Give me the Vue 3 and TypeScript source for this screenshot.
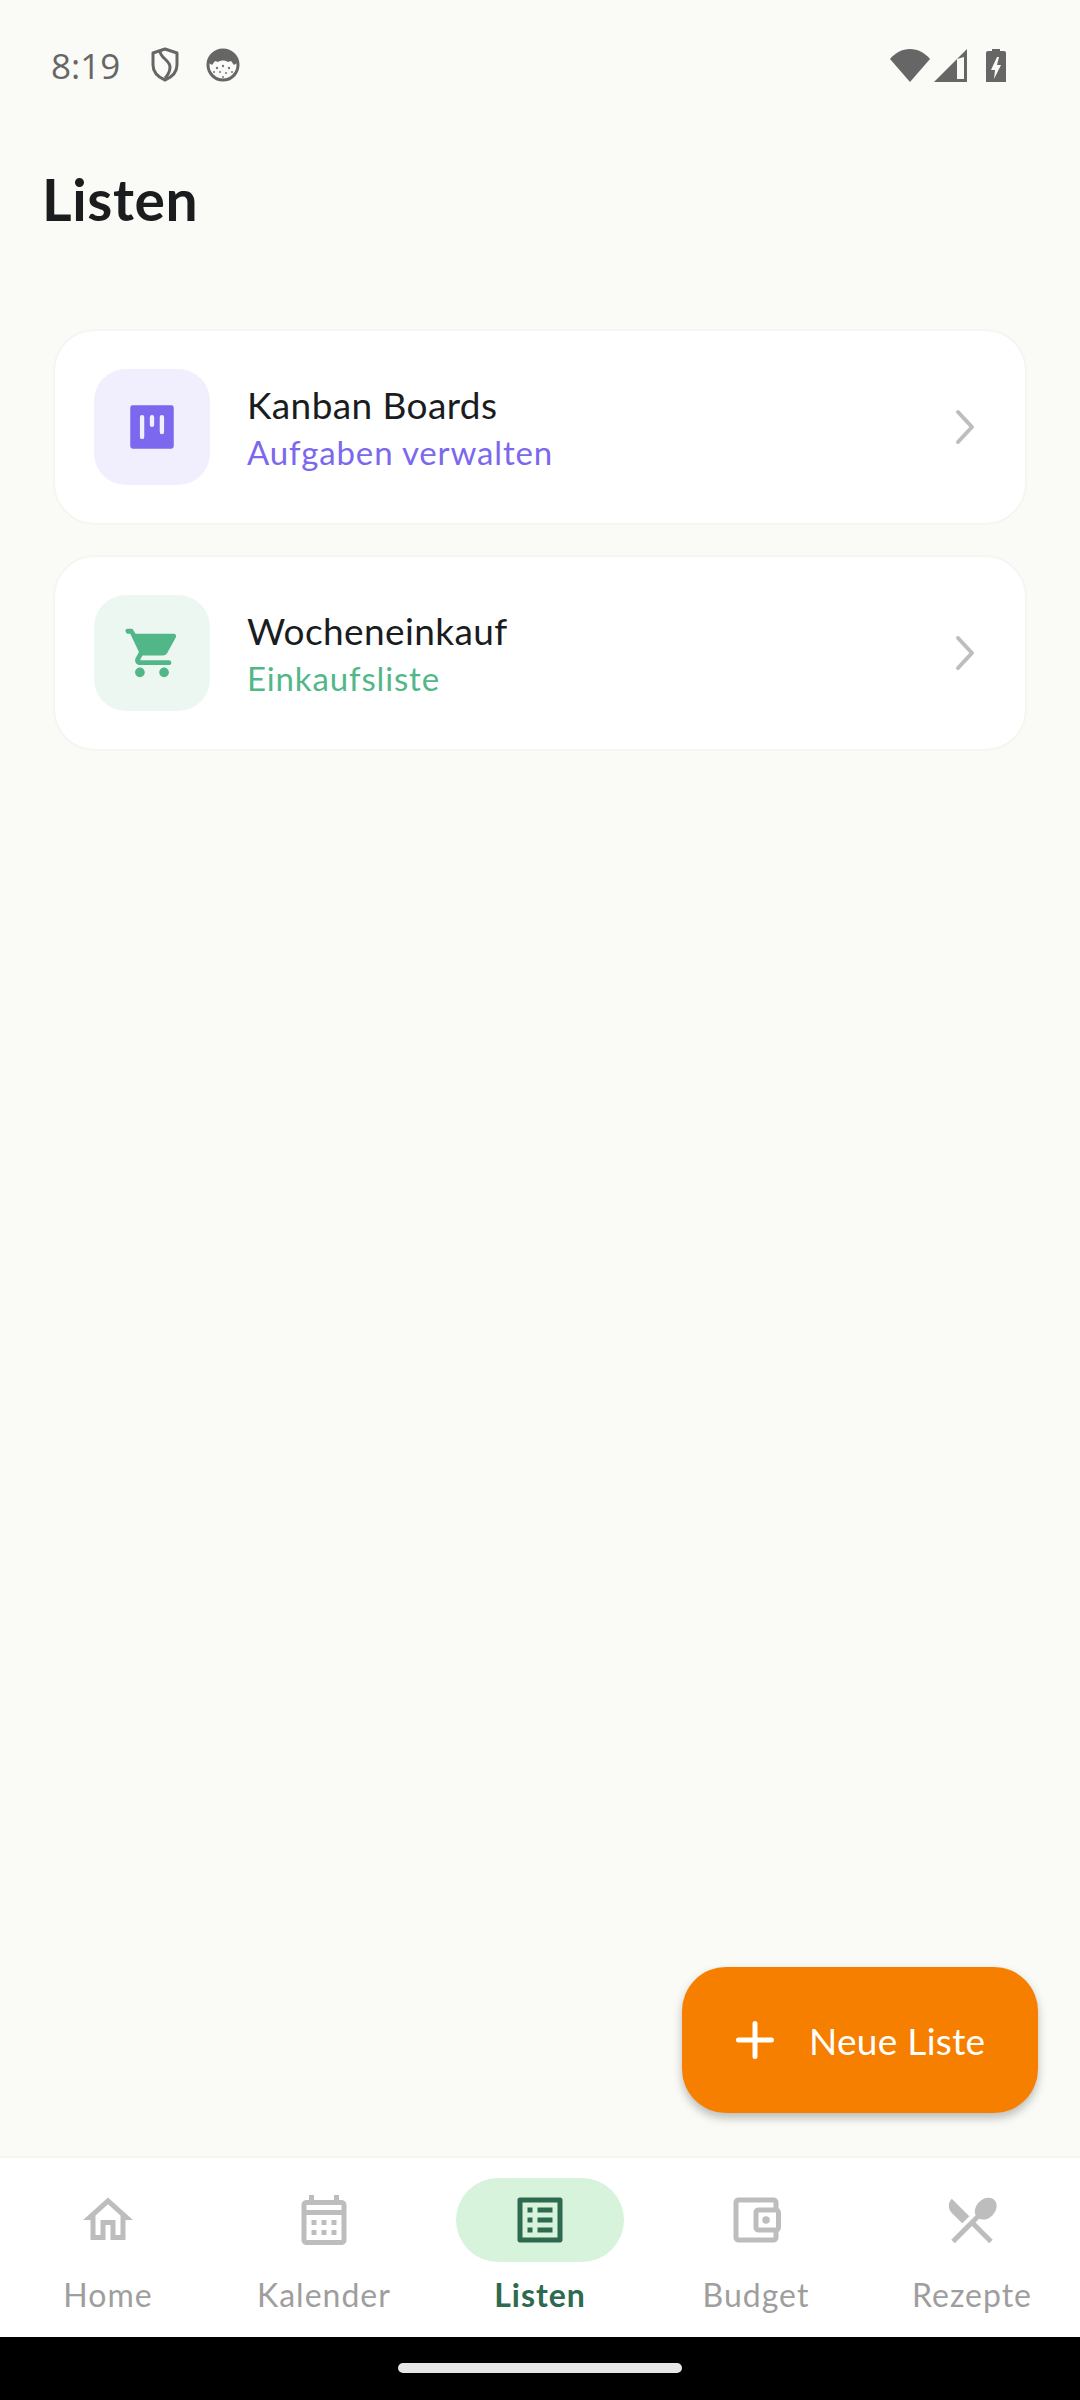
<script setup lang="ts">
interface ListCard {
  title: string
  subtitle: string
  tone: 'purple' | 'green'
}

interface NavItem {
  label: string
  path: string
  active?: boolean
}

const cards: ListCard[] = [
  { title: 'Kanban Boards', subtitle: 'Aufgaben verwalten', tone: 'purple' },
  { title: 'Wocheneinkauf', subtitle: 'Einkaufsliste', tone: 'green' },
]

const navItems: NavItem[] = [
  {
    label: 'Home',
    path: 'M12 5.69l5 4.5V18h-2v-6H9v6H7v-7.81l5-4.5M12 3L2 12h3v8h6v-6h2v6h6v-8h3L12 3z',
  },
  {
    label: 'Kalender',
    path: 'M19 4h-1V2h-2v2H8V2H6v2H5c-1.11 0-1.99.9-1.99 2L3 20c0 1.1.89 2 2 2h14c1.1 0 2-.9 2-2V6c0-1.1-.9-2-2-2zm0 16H5V10h14v10zm0-12H5V6h14v2zM9 14H7v-2h2v2zm4 0h-2v-2h2v2zm4 0h-2v-2h2v2zm-8 4H7v-2h2v2zm4 0h-2v-2h2v2zm4 0h-2v-2h2v2z',
  },
  {
    label: 'Listen',
    active: true,
    path: 'M19 5v14H5V5h14m1.1-2H3.9c-.5 0-.9.4-.9.9v16.2c0 .4.4.9.9.9h16.2c.4 0 .9-.5.9-.9V3.9c0-.5-.5-.9-.9-.9zM11 7h6v2h-6V7zm0 4h6v2h-6v-2zm0 4h6v2h-6zM7 7h2v2H7zm0 4h2v2H7zm0 4h2v2H7z',
  },
  {
    label: 'Budget',
    path: 'M21 7.28V5c0-1.1-.9-2-2-2H5c-1.11 0-2 .9-2 2v14c0 1.1.89 2 2 2h14c1.1 0 2-.9 2-2v-2.28c.59-.35 1-.98 1-1.72V9c0-.74-.41-1.38-1-1.72zM20 9v6h-7V9h7zM5 19V5h14v2h-6c-1.1 0-2 .9-2 2v6c0 1.1.9 2 2 2h6v2H5zM16 13.5a1.5 1.5 0 1 0 0-3 1.5 1.5 0 0 0 0 3z',
  },
  {
    label: 'Rezepte',
    path: 'M8.1 13.34l2.83-2.83L3.91 3.5c-1.56 1.56-1.56 4.09 0 5.66l4.19 4.18zm6.78-1.81c1.53.71 3.68.21 5.27-1.38 1.91-1.91 2.28-4.65.81-6.12-1.46-1.46-4.2-1.1-6.12.81-1.59 1.59-2.09 3.74-1.38 5.27L3.7 19.87l1.41 1.41L12 14.41l6.88 6.88 1.41-1.41L13.41 13l1.47-1.47z',
  },
]
</script>

<template>
  <div class="page">
    <div class="status-bar">
      <span class="time">8:19</span>
      <svg class="status-shield" viewBox="0 0 30 36" width="30" height="36">
        <path d="M15 2l12 4v12c0 7-5 12-12 15C8 30 3 25 3 18V6z" fill="none" stroke="#666" stroke-width="3" stroke-linejoin="round" />
        <path d="M10 4c0 7 10 9 10 16 0 4-2 8-5 11" fill="none" stroke="#666" stroke-width="3" />
      </svg>
      <svg class="status-face" viewBox="0 0 34 34" width="34" height="34">
        <circle cx="17" cy="17" r="15" fill="#fafbf6" stroke="#666" stroke-width="3" />
        <path d="M3 15C4 7 10 2 17 2s13 5 14 13l-3 2-3-4-3 1c-3-2-7-2-10 0l-3-1-3 4z" fill="#666" />
        <g fill="#777">
          <circle cx="11" cy="20" r="1.2" /><circle cx="17" cy="18" r="1.2" /><circle cx="23" cy="20" r="1.2" />
          <circle cx="8" cy="24" r="1" /><circle cx="14" cy="24" r="1" /><circle cx="20" cy="25" r="1" />
          <circle cx="26" cy="24" r="1" /><circle cx="17" cy="29" r="1" />
        </g>
      </svg>
      <div class="status-right">
        <svg viewBox="0 0 40 33" width="40" height="33">
          <path d="M0 10C5 4 12 0 20 0s15 4 20 10L20 33z" fill="#666" />
        </svg>
        <svg viewBox="0 0 33 33" width="33" height="33">
          <path d="M33 0v33H0zM23 10v20h7V8z" fill="#666" fill-rule="evenodd" />
        </svg>
        <svg class="status-battery" viewBox="0 0 20 33" width="20" height="33">
          <path d="M6 0h8v2h4a2 2 0 0 1 2 2v29H0V4a2 2 0 0 1 2-2h4zM11 8l-6 13h4l-1 9 7-14h-4l2-8z" fill="#666" fill-rule="evenodd" />
        </svg>
      </div>
    </div>

    <h1 class="page-title">Listen</h1>

    <main class="list">
      <div v-for="card in cards" :key="card.title" class="card">
        <div class="card-icon" :class="card.tone">
          <svg v-if="card.tone === 'purple'" viewBox="0 0 24 24" width="58" height="58">
            <path
              d="M4 3h16a1 1 0 0 1 1 1v16a1 1 0 0 1-1 1H4a1 1 0 0 1-1-1V4a1 1 0 0 1 1-1zM7.900 7a.9.9 0 0 0-.9.9v8.200a.9.9 0 0 0 1.800 0V7.900a.9.9 0 0 0-.9-.9zM12 7a.9.9 0 0 0-.9.9v3.200a.9.9 0 0 0 1.800 0V7.900A.9.9 0 0 0 12 7zM16.100 7a.9.900 0 0 0-.9.9v6.200a.9.900 0 0 0 1.800 0V7.900a.9.900 0 0 0-.9-.9z"
              fill="#7b68ee"
              fill-rule="evenodd"
            />
          </svg>
          <svg v-else viewBox="0 0 24 24" width="58" height="58">
            <path
              d="M7 18c-1.100 0-1.990.9-1.990 2S5.900 22 7 22s2-.9 2-2-.9-2-2-2zM1 2.800C1 2.400 1.400 2 1.800 2h1.500c.4 0 .8.200 1 .6l.9 1.400H21c.55 0 1 .45 1 1 0 .17-.04.34-.12.48l-3.580 6.490c-.34.62-1 1.030-1.750 1.030H8.100l-.9 1.630-.03.120c0 .14.110.25.25.25H19c.55 0 1 .45 1 1s-.45 1-1 1H7c-1.100 0-2-.9-2-2 0-.35.09-.68.25-.96L6.600 11.590 3 4H1.800C1.400 4 1 3.200 1 2.800zM17 18c-1.100 0-1.990.9-1.990 2s.89 2 1.990 2 2-.9 2-2-.9-2-2-2z"
              fill="#52b788"
            />
          </svg>
        </div>
        <div class="card-text">
          <div class="card-title">{{ card.title }}</div>
          <div class="card-subtitle" :class="card.tone">{{ card.subtitle }}</div>
        </div>
        <svg class="chevron" viewBox="0 0 24 36" width="24" height="36">
          <path d="M4 3l14 15L4 33" fill="none" stroke="#bdbdbd" stroke-width="4" stroke-linecap="round" stroke-linejoin="round" />
        </svg>
      </div>
    </main>

    <button class="fab">
      <svg viewBox="0 0 38 38" width="38" height="38">
        <path d="M19 2.500v33M2.500 19h33" stroke="#fff" stroke-width="5" stroke-linecap="round" />
      </svg>
      <span>Neue Liste</span>
    </button>

    <nav class="bottom-nav">
      <div v-for="item in navItems" :key="item.label" class="nav-item" :class="{ active: item.active }">
        <div class="nav-icon">
          <svg viewBox="0 0 24 24" width="60" height="60">
            <path :d="item.path" fill="currentColor" />
          </svg>
        </div>
        <span class="nav-label">{{ item.label }}</span>
      </div>
    </nav>

    <div class="gesture-bar">
      <div class="gesture-handle"></div>
    </div>
  </div>
</template>

<style scoped>
.page {
  position: relative;
  display: flex;
  flex-direction: column;
  height: 2400px;
  background: #fafbf6;
  font-family: Lato, "Noto Sans", sans-serif;
  color: #1a1c1e;
}

.status-bar {
  display: flex;
  align-items: center;
  box-sizing: border-box;
  height: 97px;
  padding: 33px 74px 0 51px;
}

.time {
  font-family: "Open Sans", sans-serif;
  font-size: 35px;
  color: #666;
  width: 99px;
}

.status-shield {
  margin-right: 26px;
}

.status-right {
  display: flex;
  align-items: center;
  gap: 4px;
  margin-left: auto;
}

.status-battery {
  margin-left: 15px;
}

.page-title {
  margin: 73px 0 0 42px;
  font-size: 57px;
  line-height: 58px;
  font-weight: 700;
  letter-spacing: 0.6px;
}

.list {
  flex: 1;
  display: flex;
  flex-direction: column;
  gap: 30px;
  padding: 101px 53px 0;
}

.card {
  display: flex;
  align-items: center;
  box-sizing: border-box;
  height: 196px;
  padding: 0 39px;
  background: #fff;
  border: 2px solid #f5f5f1;
  border-radius: 42px;
}

.card-icon {
  display: flex;
  align-items: center;
  justify-content: center;
  width: 116px;
  height: 116px;
  margin-right: 37px;
  border-radius: 32px;
  flex-shrink: 0;
}

.card-icon.purple {
  background: #f1effd;
}

.card-icon.green {
  background: #edf7f2;
}

.card-text {
  flex: 1;
  padding-top: 2px;
}

.card-title {
  font-size: 37px;
  line-height: 46px;
  letter-spacing: 0.4px;
  color: #1a1c1e;
}

.card-subtitle {
  margin-top: 2px;
  font-size: 33px;
  line-height: 44px;
  letter-spacing: 0.85px;
}

.card-subtitle.purple {
  color: #7b68ee;
}

.card-subtitle.green {
  color: #52b788;
}

.chevron {
  margin-right: 8px;
}

.fab {
  position: absolute;
  left: 682px;
  top: 1967px;
  display: flex;
  align-items: center;
  gap: 35px;
  width: 356px;
  height: 146px;
  padding: 0 0 0 54px;
  box-sizing: border-box;
  border: none;
  border-radius: 44px;
  background: #f77f00;
  color: #fff;
  font-family: inherit;
  font-size: 37px;
  letter-spacing: 0.3px;
  box-shadow: 0 5px 10px rgba(0, 0, 0, 0.25);
}

.bottom-nav {
  display: flex;
  height: 181px;
  padding-top: 20px;
  box-sizing: border-box;
  background: #fff;
  border-top: 2px solid #f5f5f1;
}

.nav-item {
  flex: 1;
  display: flex;
  flex-direction: column;
  align-items: center;
  color: #bdbdbd;
}

.nav-icon {
  display: flex;
  align-items: center;
  justify-content: center;
  width: 168px;
  height: 84px;
  border-radius: 42px;
}

.nav-item.active .nav-icon {
  background: #d8f3dc;
  color: #2d6a4f;
}

.nav-label {
  margin-top: 13px;
  font-size: 32px;
  line-height: 40px;
  letter-spacing: 1px;
  color: #9e9e9e;
}

.nav-item.active .nav-label {
  color: #2d6a4f;
  font-weight: 700;
}

.gesture-bar {
  display: flex;
  justify-content: center;
  height: 63px;
  padding-top: 26px;
  box-sizing: border-box;
  background: #000;
}

.gesture-handle {
  width: 284px;
  height: 10px;
  border-radius: 5px;
  background: #e6e6e6;
}
</style>
